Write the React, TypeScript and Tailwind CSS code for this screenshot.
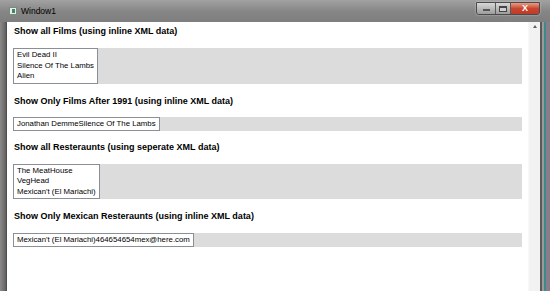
import React from 'react';

const films = ['Evil Dead II', 'Silence Of The Lambs', 'Alien'];
const restaurants = ['The MeatHouse', 'VegHead', "Mexican't (El Mariachi)"];

const Heading: React.FC<{ text: string; className?: string }> = ({ text, className = '' }) => (
  <div className={`h-[16px] flex items-center pl-[7px] font-bold text-[9px] text-black ${className}`}>{text}</div>
);

const ListPanel: React.FC<{ items: string[] }> = ({ items }) => (
  <div className="mx-[6px] bg-[#dcdcdc] flex">
    <div className="bg-white border border-[#8a8e96] px-[3px] py-[1px] flex flex-col">
      {items.map((item, i) => (
        <span key={i} className="text-[7.8px] leading-[10.5px] text-black whitespace-nowrap">{item}</span>
      ))}
    </div>
  </div>
);

const StripPanel: React.FC<{ text: string }> = ({ text }) => (
  <div className="mx-[6px] bg-[#dcdcdc] flex h-[14px]">
    <div className="bg-white border border-[#8a8e96] px-[3px] flex items-center">
      <span className="text-[7.8px] leading-[10px] text-black whitespace-nowrap">{text}</span>
    </div>
  </div>
);

export default function App() {
  return (
    <div
      className="w-[550px] h-[291px] overflow-hidden flex flex-col bg-[#7c7c7c]"
      style={{ fontFamily: '"Liberation Sans", Arial, sans-serif' }}
    >
      {/* title bar */}
      <div className="h-[22px] flex items-center bg-gradient-to-b from-[#a2a2a2] via-[#868686] to-[#7e7e7e]">
        <div className="ml-[9px] w-[8px] h-[8px] bg-[#e6ece8] border border-[#7a8a80] flex items-center justify-center">
          <div className="w-[3px] h-[4px] bg-[#3e8a60]" />
        </div>
        <span className="ml-[4px] text-[8.5px] text-black">Window1</span>
        <div className="ml-auto mr-[10px] flex h-[13px] self-start mt-[2px] rounded-b-[3px] overflow-hidden border border-[#4a4a4a] shadow-[0_0_2px_rgba(255,255,255,0.6)]">
          <div className="w-[19px] bg-gradient-to-b from-[#d8d8d8] to-[#9c9c9c] flex items-end justify-center pb-[3px] border-r border-[#5a5a5a]">
            <div className="w-[7px] h-[2px] bg-white border border-[#555]" />
          </div>
          <div className="w-[15px] bg-gradient-to-b from-[#d8d8d8] to-[#9c9c9c] flex items-center justify-center border-r border-[#5a5a5a]">
            <div className="w-[8px] h-[6px] border border-[#444] border-t-2 bg-[#cfcfcf]" />
          </div>
          <div className="w-[28px] bg-gradient-to-b from-[#e89a88] via-[#c9462c] to-[#c0392b] flex items-center justify-center text-white font-bold text-[9px] leading-none">
            X
          </div>
        </div>
      </div>

      {/* body */}
      <div className="flex-1 flex">
        <div className="w-[7px] bg-gradient-to-r from-[#8a8a8a] via-[#7a7676] to-[#5e5e5e] border-r border-[#4e4e4e]" />
        <div className="flex-1 flex bg-white">
          <div className="flex-1 flex flex-col pt-[2px]">
            <Heading text="Show all Films (using inline XML data)" />
            <div className="h-[8px]" />
            <ListPanel items={films} />
            <Heading text="Show Only Films After 1991 (using inline XML data)" className="mt-[10px]" />
            <div className="h-[7px]" />
            <StripPanel text="Jonathan DemmeSilence Of The Lambs" />
            <Heading text="Show all Resteraunts (using seperate XML data)" className="mt-[9px]" />
            <div className="h-[8px]" />
            <ListPanel items={restaurants} />
            <Heading text="Show Only Mexican Resteraunts (using inline XML data)" className="mt-[10px]" />
            <div className="h-[8px]" />
            <StripPanel text="Mexican't (El Mariachi)464654654mex@here.com" />
          </div>
          <div className="w-[12px] bg-[#f2f2f2] border-l border-[#f8f8f8] flex flex-col items-center pt-[3px]">
            <div className="w-0 h-0 border-l-[2.5px] border-r-[2.5px] border-b-[3px] border-l-transparent border-r-transparent border-b-[#606060]" />
          </div>
        </div>
        <div className="w-[10px] flex">
          <div className="w-[2px] bg-[#5a5a5a]" />
          <div className="w-[2px] bg-[#9a9a9a]" />
          <div className="w-[2px] bg-[#3d8a8c]" />
          <div className="flex-1 bg-[#8a7c88]" />
        </div>
      </div>
    </div>
  );
}
